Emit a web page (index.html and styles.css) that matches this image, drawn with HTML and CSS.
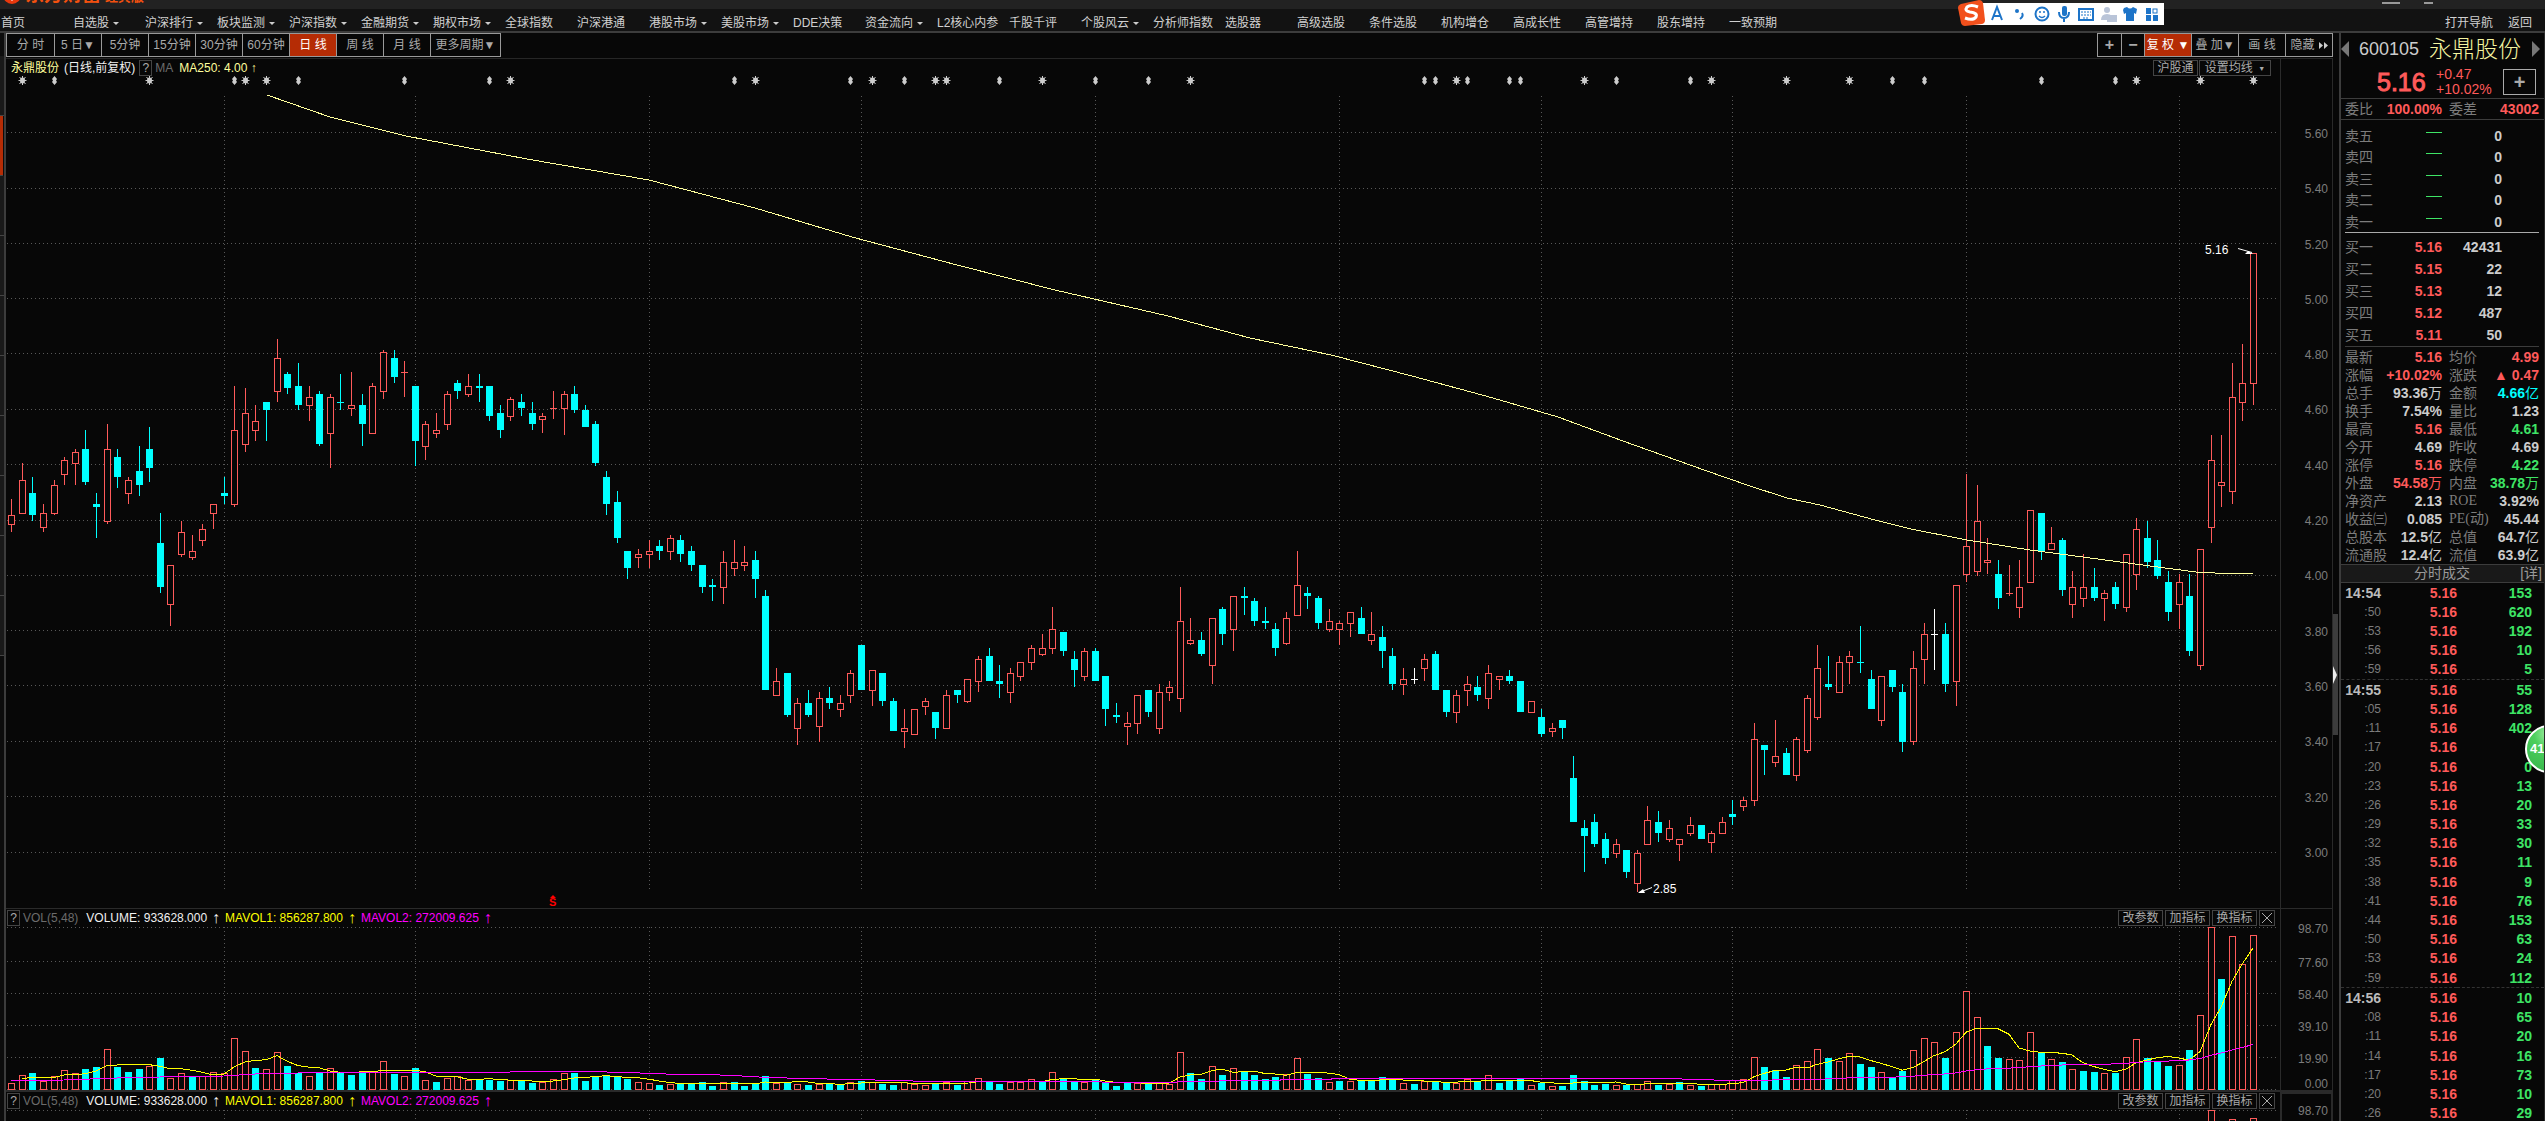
FILE: index.html
```html
<!DOCTYPE html>
<html lang="zh-CN">
<head>
<meta charset="utf-8">
<title>永鼎股份 600105</title>
<link rel="stylesheet" href="styles.css">
</head>
<body>
<header class="titlebar">
  <svg class="brand-mark" viewBox="0 0 18 18" aria-hidden="true"><circle cx="9" cy="9" r="9" fill="#e8380d"/><path d="M6 6h6l1 5-4 4-4-4z" fill="#fff"/></svg>
  <span class="brand">东方财富</span><span class="edition">经典版</span>
  <span class="window-marks"><i></i><i></i></span>
</header>
<nav class="menu">
  <a href="#">首页</a><a href="#" class="drop">自选股</a><a href="#" class="drop">沪深排行</a><a href="#" class="drop">板块监测</a><a href="#" class="drop">沪深指数</a><a href="#" class="drop">金融期货</a><a href="#" class="drop">期权市场</a><a href="#">全球指数</a><a href="#">沪深港通</a><a href="#" class="drop">港股市场</a><a href="#" class="drop">美股市场</a><a href="#">DDE决策</a><a href="#" class="drop">资金流向</a><a href="#">L2核心内参</a><a href="#">千股千评</a><a href="#" class="drop">个股风云</a><a href="#">分析师指数</a><a href="#">选股器</a><a href="#">高级选股</a><a href="#">条件选股</a><a href="#">机构增仓</a><a href="#">高成长性</a><a href="#">高管增持</a><a href="#">股东增持</a><a href="#">一致预期</a>
  <span class="menu-right"><a href="#">打开导航</a><a href="#">返回</a></span>
</nav>
<div class="ime" aria-label="输入法">
  <svg viewBox="0 0 206 26" aria-hidden="true">
    <rect x="12" y="3" width="194" height="22" fill="#fff"/>
    <path d="M3 4 21 0q3 0 4 3l2 17q0 3-3 4L7 26q-3 0-4-3L0 8q0-3 3-4z" fill="#f2501c"/>
    <path d="M20 7q-7-3-11 0-3 4 3 5 8 1 6 5-3 4-11 1" fill="none" stroke="#fff" stroke-width="3"/>
    <g fill="none" stroke="#1d74c8" stroke-width="2">
      <path d="M34 20l5-13 5 13M36 16h6"/><path d="M64 13q2 3-2 6"/><circle cx="84" cy="14" r="6.500"/><path d="M81 16q3 3 6 0M82 11v2M86 11v2" stroke-width="1.500"/>
      <path d="M101 12q0 6 5 6t5-6M106 18v4"/><rect x="121" y="9" width="14" height="11"/><path d="M123 12h10M123 15h10M125 18h6" stroke-dasharray="2 1" stroke-width="1"/>
      <rect x="195" y="9" width="4" height="4" stroke-width="1"/>
    </g>
    <g fill="#1d74c8"><circle cx="59" cy="11" r="2"/><rect x="104" y="6" width="5" height="10" rx="2"/><path d="M166 8l3-1q3 3 6 0l4 2-1 5-2-1v8h-8v-8l-2 1-1-4z"/><rect x="188" y="8" width="5" height="6"/><rect x="188" y="15" width="5" height="6"/><rect x="195" y="15" width="5" height="6"/></g>
    <g fill="#b9c4d8"><circle cx="149" cy="10" r="3"/><path d="M143 20q0-6 6-6t6 6z"/><rect x="149" y="15" width="10" height="7"/></g>
  </svg>
</div>
<main class="workspace">
  <aside class="tabs"><i></i><i class="on"></i><i></i><i></i><i></i><i></i><i></i><i></i><i></i><i></i></aside>
  <section class="charts">
    <div class="toolbar">
      <div class="group periods"><button>分 时</button><button>5 日▼</button><button>5分钟</button><button>15分钟</button><button>30分钟</button><button>60分钟</button><button class="active">日 线</button><button>周 线</button><button>月 线</button><button class="wide">更多周期▼</button></div>
      <div class="group tools"><button class="sq">+</button><button class="sq">−</button><button class="active">复 权 ▼</button><button>叠 加▼</button><button>画 线</button><button>隐藏<svg viewBox="0 0 9 7" width="9" height="7" aria-hidden="true"><path d="M0 0l4 3.500-4 3.500zM5 0l4 3.500-4 3.500z" fill="#ccc"/></svg></button></div>
    </div>
    <div class="panel price">
      <div class="plot">
        <div class="legend"><span class="name">永鼎股份</span><span class="white">(日线,前复权)</span><button class="help">?</button><span class="dim">MA</span><span class="name ma">MA250: 4.00 ↑</span>
          <span class="legend-right"><button class="chip">沪股通</button><button class="chip set">设置均线 <small>▼</small></button></span></div>
        <svg class="canvas" id="price"></svg>
      </div>
      <div class="axis prices"><span>5.60</span><span>5.40</span><span>5.20</span><span>5.00</span><span>4.80</span><span>4.60</span><span>4.40</span><span>4.20</span><span>4.00</span><span>3.80</span><span>3.60</span><span>3.40</span><span>3.20</span><span>3.00</span></div>
    </div>
    <div class="panel volume">
      <div class="plot">
        <div class="legend"><button class="help">?</button><span class="dim">VOL(5,48)</span><span class="white v">VOLUME: 933628.000</span><b class="white">↑</b><span class="yellow">MAVOL1: 856287.800</span><b class="yellow">↑</b><span class="magenta">MAVOL2: 272009.625</span><b class="magenta">↑</b>
          <span class="legend-right"><button class="chip">改参数</button><button class="chip">加指标</button><button class="chip">换指标</button><button class="chip close" aria-label="关闭"></button></span></div>
        <svg class="canvas" id="vol1"></svg>
      </div>
      <div class="axis volumes"><span>98.70</span><span>77.60</span><span>58.40</span><span>39.10</span><span>19.90</span><span>0.00</span></div>
    </div>
    <div class="panel volume second">
      <div class="plot">
        <div class="legend"><button class="help">?</button><span class="dim">VOL(5,48)</span><span class="white v">VOLUME: 933628.000</span><b class="white">↑</b><span class="yellow">MAVOL1: 856287.800</span><b class="yellow">↑</b><span class="magenta">MAVOL2: 272009.625</span><b class="magenta">↑</b>
          <span class="legend-right"><button class="chip">改参数</button><button class="chip">加指标</button><button class="chip">换指标</button><button class="chip close" aria-label="关闭"></button></span></div>
        <svg class="canvas" id="vol2"></svg>
      </div>
      <div class="axis volumes"><span>98.70</span></div>
    </div>
  </section>
  <div class="splitter"><button aria-label="收起"></button></div>
  <aside class="quote">
    <div class="stock"><button class="prev" aria-label="上一只"></button><span class="code">600105</span><h1>永鼎股份</h1><button class="next" aria-label="下一只"></button></div>
    <div class="last"><strong>5.16</strong><span>+0.47<br>+10.02%</span><button aria-label="加自选">+</button></div>
    <div class="pairs ratio"><p>委比<b class="up">100.00%</b></p><p>委差<b class="up">43002</b></p></div>
    <table class="depth sell">
      <tr><th>卖五</th><td><i></i></td><td>0</td></tr><tr><th>卖四</th><td><i></i></td><td>0</td></tr><tr><th>卖三</th><td><i></i></td><td>0</td></tr><tr><th>卖二</th><td><i></i></td><td>0</td></tr><tr><th>卖一</th><td><i></i></td><td>0</td></tr>
    </table>
    <table class="depth buy">
      <tr><th>买一</th><td>5.16</td><td>42431</td></tr><tr><th>买二</th><td>5.15</td><td>22</td></tr><tr><th>买三</th><td>5.13</td><td>12</td></tr><tr><th>买四</th><td>5.12</td><td>487</td></tr><tr><th>买五</th><td>5.11</td><td>50</td></tr>
    </table>
    <div class="pairs stats">
      <p>最新<b class="up">5.16</b></p><p>均价<b class="up">4.99</b></p>
      <p>涨幅<b class="up">+10.02%</b></p><p>涨跌<b class="up">▲ 0.47</b></p>
      <p>总手<b>93.36<em>万</em></b></p><p>金额<b class="cyan">4.66<em>亿</em></b></p>
      <p>换手<b>7.54%</b></p><p>量比<b>1.23</b></p>
      <p>最高<b class="up">5.16</b></p><p>最低<b class="down">4.61</b></p>
      <p>今开<b>4.69</b></p><p>昨收<b>4.69</b></p>
      <p>涨停<b class="up">5.16</b></p><p>跌停<b class="down">4.22</b></p>
      <p>外盘<b class="up">54.58<em>万</em></b></p><p>内盘<b class="down">38.78<em>万</em></b></p>
      <p>净资产<b>2.13</b></p><p><span class="latin">ROE</span><b>3.92%</b></p>
      <p>收益㈢<b>0.085</b></p><p><span class="latin">PE(动)</span><b>45.44</b></p>
      <p>总股本<b>12.5<em>亿</em></b></p><p>总值<b>64.7<em>亿</em></b></p>
      <p>流通股<b>12.4<em>亿</em></b></p><p>流值<b>63.9<em>亿</em></b></p>
    </div>
    <div class="deals-head"><h2>分时成交</h2><a href="#">[详]</a></div>
    <table class="deals">
      <tr class="minute"><th>14:54</th><td>5.16</td><td>153</td></tr><tr><th>:50</th><td>5.16</td><td>620</td></tr><tr><th>:53</th><td>5.16</td><td>192</td></tr><tr><th>:56</th><td>5.16</td><td>10</td></tr><tr><th>:59</th><td>5.16</td><td>5</td></tr>
      <tr class="minute"><th>14:55</th><td>5.16</td><td>55</td></tr><tr><th>:05</th><td>5.16</td><td>128</td></tr><tr><th>:11</th><td>5.16</td><td>402</td></tr><tr><th>:17</th><td>5.16</td><td></td></tr><tr><th>:20</th><td>5.16</td><td>0</td></tr><tr><th>:23</th><td>5.16</td><td>13</td></tr><tr><th>:26</th><td>5.16</td><td>20</td></tr><tr><th>:29</th><td>5.16</td><td>33</td></tr><tr><th>:32</th><td>5.16</td><td>30</td></tr><tr><th>:35</th><td>5.16</td><td>11</td></tr><tr><th>:38</th><td>5.16</td><td>9</td></tr><tr><th>:41</th><td>5.16</td><td>76</td></tr><tr><th>:44</th><td>5.16</td><td>153</td></tr><tr><th>:50</th><td>5.16</td><td>63</td></tr><tr><th>:53</th><td>5.16</td><td>24</td></tr><tr><th>:59</th><td>5.16</td><td>112</td></tr>
      <tr class="minute"><th>14:56</th><td>5.16</td><td>10</td></tr><tr><th>:08</th><td>5.16</td><td>65</td></tr><tr><th>:11</th><td>5.16</td><td>20</td></tr><tr><th>:14</th><td>5.16</td><td>16</td></tr><tr><th>:17</th><td>5.16</td><td>73</td></tr><tr><th>:20</th><td>5.16</td><td>10</td></tr><tr><th>:26</th><td>5.16</td><td>29</td></tr>
    </table>
    <div class="ball">41</div>
  </aside>
</main>
<script src="chart.js"></script>
</body>
</html>
```
FILE: styles.css
```css
* { box-sizing: border-box; margin: 0; padding: 0; }
html, body { height: 100%; }
body {
  display: flex; flex-direction: column; position: relative; overflow: hidden;
  background: #070707; color: #ccc;
  font: 12px/16px "Liberation Sans", "Noto Sans CJK SC", sans-serif;
}
button { font: inherit; color: inherit; background: none; border: 0; white-space: nowrap; }
a { color: inherit; text-decoration: none; }
i, em { font-style: normal; }

.titlebar { flex: none; display: flex; align-items: flex-end; height: 9px; padding: 0 0 5px 3px; gap: 4px; background: #222; overflow: hidden; }
.brand-mark { width: 18px; height: 18px; flex: none; }
.brand, .edition { color: #f4510f; font-weight: bold; line-height: 19px; }
.brand { font-size: 19px; }
.edition { font-size: 13px; line-height: 15px; }
.window-marks { margin-left: auto; display: flex; gap: 24px; padding-right: 112px; }
.window-marks i { width: 18px; height: 2px; background: #999; }
.window-marks i + i { width: 9px; }

.menu { flex: none; display: flex; height: 24px; padding-left: 1px; background: #121212; border-bottom: 2px solid #3c3c3c; line-height: 28px; color: #d0d0d0; }
.menu > a { width: 72px; white-space: nowrap; }
.menu .drop::after { content: ""; display: inline-block; margin: 0 0 2px 4px; border: 3px solid transparent; border-top-color: #ccc; border-bottom: 0; }
.menu-right { margin-left: auto; display: flex; gap: 15px; padding-right: 13px; }
.ime { position: absolute; top: 0; right: 381px; width: 206px; }
.ime svg { display: block; width: 206px; height: 26px; }

.workspace { flex: 1; display: flex; min-height: 0; }
.tabs { width: 6px; padding-top: 23px; background: #0c0c0c; border-right: 2px solid #3c3c3c; }
.tabs i { display: block; height: 60px; background: #191919; border-bottom: 1px solid #444; }
.tabs .on { width: 3px; background: #b52c05; }
.charts { flex: 1; min-width: 0; display: flex; flex-direction: column; overflow: hidden; }

.toolbar { flex: none; display: flex; justify-content: space-between; height: 26px; border-bottom: 1px solid #262626; }
.group { display: flex; height: 24px; border: 1px solid #999; color: #aaa; }
.group button { width: 47px; border-left: 1px solid #999; line-height: 22px; }
.group button:first-child { border-left: 0; }
.group .wide { width: 70px; }
.group .sq { width: 23px; font-size: 16px; font-weight: bold; }
.group .active { background: #b52c05; color: #fff; }
.tools svg { margin-left: 4px; }

.panel { display: flex; flex: none; border-bottom: 1px solid #2a2a2a; }
.price { height: 850px; }
.volume { height: 183px; border-bottom-width: 2px; }
.second { flex: 1; }
.plot { flex: 1; min-width: 0; position: relative; }
.canvas { position: absolute; inset: 0; width: 100%; height: 100%; }
.axis { width: 53px; padding-right: 4px; border: 0 solid #2a2a2a; border-width: 0 1px; color: #7c7c7c; text-align: right; }
.prices { display: flex; flex-direction: column; justify-content: space-between; padding-top: 67px; padding-bottom: 47px; }
.volumes { display: grid; grid-template-rows: 34px 32px 32px 32px 25px 16px; align-content: start; padding-top: 12px; }
.second .axis { border: 2px solid #2a2a2a; padding-top: 9px; padding-right: 3px; }

.legend { position: relative; z-index: 1; display: flex; align-items: center; height: 16px; margin-top: 1px; padding-left: 1px; white-space: nowrap; }
.price .legend { padding-left: 5px; }
.help { width: 13px; height: 16px; border: 1px solid #444; color: #aaa; line-height: 14px; margin-right: 3px; }
.dim { color: #6c6c6c; }
.white { color: #f0f0f0; }
.price .white { margin: 0 4px 0 5px; }
.name { color: #ffff9c; }
.ma { margin-left: 6px; }
.v { margin-left: 8px; }
.yellow { color: #ffff00; }
.magenta { color: #ff00ff; }
.legend b { width: 18px; text-align: center; font-weight: normal; font-size: 16px; }
.legend-right { margin-left: auto; display: flex; gap: 2px; padding-right: 5px; }
.price .legend-right { padding-right: 9px; gap: 1px; }
.chip { width: 45px; height: 16px; border: 1px solid #444; color: #aaa; line-height: 14px; }
.set { width: 72px; }
.set small { font-size: 7px; vertical-align: 1px; margin-left: 2px; }
.close { width: 16px; background: linear-gradient(45deg, transparent 48%, #aaa 48% 52%, transparent 52%) center / 10px 10px no-repeat, linear-gradient(-45deg, transparent 48%, #aaa 48% 52%, transparent 52%) center / 10px 10px no-repeat; }

.splitter { width: 6px; padding-top: 581px; }
.splitter button { display: block; width: 5px; height: 121px; background: #3c3c3c; }
.splitter button::after { content: ""; display: block; width: 0; border: 9px solid transparent; border-left: 4px solid #eee; border-right: 0; }

.quote { width: 206px; position: relative; border-left: 2px solid #3c3c3c; border-right: 1px solid #2a2a2a; overflow: hidden; font-size: 14px; color: #7c7c7c; }
.quote b { color: #ccc; white-space: nowrap; }
.quote em { font-weight: normal; }
.quote .up { color: #ff5a5a; }
.quote .down { color: #3ee465; }
.quote .cyan { color: #00ffff; }
.stock { display: flex; align-items: center; height: 32px; }
.prev, .next { border: 8px solid transparent; border-width: 8px 0; }
.prev { border-right: 8px solid #777; margin-right: 10px; }
.next { border-left: 8px solid #777; margin-left: auto; margin-right: 4px; }
.code { font-size: 18px; color: #ccc; margin-right: 10px; }
.stock h1 { font-size: 23px; font-weight: 300; line-height: 32px; color: #f4f4a0; }
.last { display: flex; align-items: center; height: 34px; padding: 0 8px 0 36px; border-bottom: 1px solid #3c3c3c; color: #ff5a5a; }
.last strong { font-size: 25px; font-weight: normal; -webkit-text-stroke: 1px #ff5a5a; width: 59px; }
.last span { font-size: 14px; line-height: 15px; }
.last button { margin-left: auto; width: 33px; height: 26px; border: 1px solid #aaa; color: #aaa; font-size: 20px; font-weight: bold; line-height: 22px; }
.pairs { display: grid; grid-template-columns: 97px 90px; column-gap: 7px; padding-left: 4px; line-height: 18px; }
.pairs p { display: flex; justify-content: space-between; white-space: nowrap; }
.ratio { height: 21px; line-height: 20px; border-bottom: 1px solid #3c3c3c; }
.latin { font-family: "Liberation Serif", "Noto Sans CJK SC", serif; }
.depth { width: 194px; margin-left: 4px; border-collapse: collapse; }
.depth tr { height: 22px; }
.depth th { width: 40px; font-weight: normal; text-align: left; white-space: nowrap; }
.depth td { width: 57px; text-align: right; font-weight: bold; color: #ff5a5a; }
.depth td + td { width: 97px; padding-right: 37px; color: #ccc; }
.depth i { display: block; width: 16px; height: 1px; margin: -4px 0 0 auto; background: #3ee465; }
.sell { margin-top: 5px; }
.depth.sell { border-bottom: 1px solid #aaa; height: 108px; }
.depth.buy { border-bottom: 1px solid #3c3c3c; padding-top: 3px; border-collapse: separate; border-spacing: 0; }
.depth.sell tr { height: 21px; }
.stats { padding-top: 1px; }
.deals-head { display: flex; height: 19px; padding: 0 2px 0 73px; border: solid #3c3c3c; border-width: 1px 0; background: #191919; line-height: 17px; color: #999; }
.deals-head h2 { font-size: 14px; font-weight: normal; }
.deals-head a { margin-left: auto; }
.deals { width: 203px; height: 540px; table-layout: fixed; border-collapse: collapse; line-height: 16px; }
.deals th { width: 40px; text-align: right; font-size: 12px; font-weight: normal; }
.deals td { width: 76px; text-align: right; font-weight: bold; color: #ff5a5a; }
.deals td + td { width: 87px; padding-right: 12px; color: #3ee465; }
.deals .minute th { font-size: 14px; font-weight: bold; color: #bbb; }
.deals tr + .minute { border-top: 1px dashed #333; }
.ball { position: absolute; top: 692px; right: -29px; width: 48px; height: 48px; padding-left: 3px; border: 2px solid #fff; border-radius: 50%; background: radial-gradient(circle at 50% 15%, #a8f0a8, #4ccf5c 35%, #35b34a); color: #fff; font-size: 13px; font-weight: bold; line-height: 44px; }
```
FILE: chart.js
```js
// One candle per entry: kind (r rising, c falling, w flat), high, body top, body bottom, low.
const candles = `r 499 515 525 532|r 463 480 514 514|c 477 493 515 521|r 504 513 528 532|r 480 485 514 515|r 457 460 475 485|r 449 452 464 485|c 430 449 482 485|c 493 504 507 538|r 424 449 522 524
c 449 457 477 488|r 477 480 494 504|c 446 471 485 496|c 427 449 468 482|c 513 543 587 593|r 565 565 605 626|r 521 532 555 557|r 535 551 558 560|r 524 529 541 546|r 504 504 514 529
c 477 493 496 504|r 386 430 505 507|r 388 413 445 452|r 405 421 431 441|c 402 402 410 441|r 339 358 392 402|c 372 374 388 394|c 363 386 405 410|r 386 397 406 421|c 391 394 444 446
r 394 397 434 468|c 374 402 403 410|r 372 405 409 416|c 394 405 424 446|r 383 386 434 434|r 350 352 392 399|c 350 358 377 383|r 361 372 373 397|c 386 386 441 466|r 421 424 447 460
r 413 430 434 438|r 391 394 425 430|c 380 383 391 399|r 374 386 395 397|c 374 386 388 402|c 386 386 416 421|c 405 413 430 438|r 397 399 417 421|c 394 402 408 416|c 402 413 424 430
r 413 416 420 433|r 391 408 409 419|r 391 394 409 435|c 386 394 410 413|c 405 410 427 427|c 421 424 463 466|c 471 477 504 515|c 491 502 538 543|c 551 551 568 579|r 549 554 558 568
r 540 551 555 568|c 540 546 551 560|r 535 538 552 560|c 535 540 554 562|c 546 551 565 571|c 565 565 587 593|c 579 585 587 601|r 551 562 588 604|r 540 562 569 576|r 546 562 566 571
c 551 560 579 598|c 590 596 690 690|r 668 681 696 696|c 673 673 715 717|r 698 703 729 745|c 690 703 715 717|r 692 698 727 742|c 687 698 703 709|r 695 703 710 717|r 670 673 696 703
c 645 645 690 690|r 670 670 691 706|c 673 673 701 706|c 698 701 731 731|r 709 728 732 748|r 709 709 735 735|r 698 701 707 715|c 712 712 728 739|r 690 695 729 729|c 690 690 695 703
r 679 679 702 703|r 656 659 682 692|c 648 656 681 681|c 665 681 684 698|r 668 673 693 703|r 662 662 677 681|r 645 648 663 670|r 634 648 655 656|r 607 629 649 654|c 632 632 651 656
c 651 659 670 687|r 648 651 677 681|c 648 651 681 681|c 676 676 709 726|c 703 715 717 723|r 712 723 727 745|r 695 695 724 734|c 690 690 712 717|r 684 692 729 734|r 681 687 693 701
r 587 621 699 712|r 618 640 644 645|c 632 640 654 656|r 618 618 666 684|c 607 609 634 645|r 596 596 630 651|c 587 596 598 615|c 598 601 621 626|c 607 621 623 629|c 623 629 648 656
r 612 618 644 645|r 551 585 616 616|c 587 593 596 609|c 596 598 623 629|r 609 621 630 632|r 621 623 630 645|r 612 612 624 637|c 607 618 634 634|r 612 634 641 645|c 626 637 651 668
c 648 656 684 690|r 668 679 685 695|w 668 679 680 684|r 654 659 669 681|c 651 654 690 690|c 690 690 712 717|r 690 695 713 723|r 676 684 691 706|c 676 687 695 701|r 665 673 699 709
r 676 676 680 690|c 670 676 681 684|c 681 681 712 712|r 701 701 713 713|c 709 717 734 737|r 723 728 732 737|c 720 720 728 739|c 756 778 822 822|c 820 828 836 872|c 814 822 844 847
c 833 839 858 864|r 839 844 854 858|c 850 850 872 878|r 850 853 884 892|r 806 820 845 845|c 811 822 833 842|r 820 828 840 842|r 839 839 845 861|r 817 825 834 836|c 825 825 839 839
r 831 833 843 853|r 817 822 834 834|c 800 814 817 825|r 797 800 807 811|r 723 739 801 806|c 745 745 750 775|r 720 756 763 767|c 748 753 775 775|r 737 739 776 781|r 695 698 751 753
r 645 668 718 720|c 656 684 687 690|r 656 662 693 693|r 651 656 663 684|c 626 662 663 673|c 670 679 709 709|r 676 676 721 726|c 670 670 687 692|c 684 692 742 752|r 651 668 742 745
r 623 634 660 684|w 609 634 635 670|c 623 634 684 692|r 585 585 682 706|r 474 546 575 582|r 485 521 572 576|r 538 560 563 574|c 560 574 598 609|r 565 593 594 596|r 560 587 608 618
r 510 510 583 583|c 513 513 551 560|r 527 543 550 550|c 538 540 590 596|r 571 587 605 618|r 554 587 599 607|c 568 587 598 601|r 590 593 599 621|c 582 587 604 609|r 554 554 608 612
r 518 529 575 590|c 521 538 562 568|c 540 560 576 579|c 571 582 612 621|r 574 582 605 629|c 574 596 651 656|r 549 549 666 670|r 435 460 528 543|r 435 482 486 507|r 363 397 492 504
r 344 383 403 421|r 253 253 384 405`.split(/[|\n]/).map(s => { const p = s.split(" "); return [p[0], ...p.slice(1).map(Number)]; });

const volumes = [7,15,17,9,14,20,17,21,23,41,23,18,21,24,32,12,17,14,14,18,17,52,39,22,21,38,24,17,14,18,
22,18,15,18,18,29,16,14,22,10,8,12,14,10,10,10,9,10,9,7,8,11,17,17,9,14,14,14,11,8,
7,5,6,7,6,8,4,8,8,4,6,14,7,8,6,5,6,6,6,8,9,8,6,5,8,6,5,7,8,5,
9,12,8,6,8,8,11,8,18,11,8,8,10,8,4,7,7,7,7,6,38,17,11,24,15,22,19,15,11,13,
16,32,16,12,8,9,9,10,10,13,10,7,6,9,9,8,7,11,8,15,7,9,11,5,7,4,4,15,9,5,
6,5,5,6,9,5,6,8,5,4,6,6,10,11,33,23,20,13,25,29,41,32,29,37,26,23,18,13,19,40,
52,48,32,58,99,73,44,32,31,30,58,37,31,28,21,19,18,17,17,33,51,32,28,24,25,40,75,163,111,154,126,155];

const ma250 = [[267,95],[330,117],[406,136],[527,159],[649,180],[755,208],[852,237],[957,265],[1055,290],[1168,316],[1250,338],[1331,355],[1412,376],[1493,398],[1558,417],[1623,441],[1704,470],[1750,486],[1787,498],[1820,505],[1875,520],[1911,529],[1967,540],[2030,550],[2090,558],[2150,566],[2196,572],[2215,573],[2253,573]];
const earlyMavol2 = [[0,9],[5,10],[10,12],[14,13],[20,14],[23,16],[27,17],[31,18],[47,18]];
const stars = [1,13,22,24,47,70,81,87,88,97,111,136,148,160,167,173,200,206,211];
const diamonds = [4,21,27,37,45,68,79,84,93,102,107,133,134,137,141,142,151,158,177,180,191,198];
const months = [20,38,60,80,102,125,144,162,184,204];
const RED = "#ff5a5a", CYAN = "#00ffff", GRID = "#585858";

let scale = 1;
const cx = i => Math.round(scale * (5 + 10.626 * i));
const line = (x1, y1, x2, y2, c, extra = "") => `<path d="M${x1} ${y1}L${x2} ${y2}" stroke="${c}" fill="none" ${extra}/>`;
const poly = (pts, c) => `<polyline points="${pts.join(" ")}" fill="none" stroke="${c}" shape-rendering="crispEdges"/>`;

function grid(w, rows, top, bottom) {
  const dots = 'stroke-dasharray="1 3" shape-rendering="crispEdges"';
  return rows.map(y => line(1, y + .5, w - 3, y + .5, GRID, dots)).join("") +
    months.map(i => line(cx(i) + .5, top, cx(i) + .5, bottom, GRID, dots)).join("");
}

function open(id, top) {
  const svg = document.getElementById(id);
  const box = svg.getBoundingClientRect();
  scale = box.width / 2274;
  svg.setAttribute("viewBox", `0 ${top} ${box.width} ${box.height}`);
  return [svg, box.width];
}

function drawPrice() {
  const [svg, w] = open("price", 59);
  let out = grid(w, [132,188,243,298,353,409,464,520,575,630,685,741,796,852], 96, 890);
  candles.forEach(([kind, hi, top, bot, lo], i) => {
    const x = cx(i), c = kind === "r" ? RED : kind === "c" ? CYAN : "#fff";
    out += `<rect x="${x}" y="${hi}" width="1" height="${Math.max(top - hi, 0)}" fill="${c}"/><rect x="${x}" y="${bot}" width="1" height="${Math.max(lo - bot, 0)}" fill="${c}"/>`;
    out += kind === "r" && bot - top > 1
      ? `<rect x="${x - 2.5}" y="${top + .5}" width="6" height="${bot - top - 1}" fill="#070707" stroke="${c}"/>`
      : `<rect x="${x - 3}" y="${top}" width="7" height="${bot - top}" fill="${c}"/>`;
  });
  out += poly(ma250.map(([x, y]) => [(x - 6) * scale, y]), "#ffff9c");
  stars.forEach(i => { const x = cx(i) + .5;
    out += `<ellipse cx="${x}" cy="80.500" rx="2.500" ry="3" fill="#ccc"/><path d="M${x} 76v9M${x - 4} 80.500h8M${x - 3} 77l6 7M${x + 3} 77l-6 7" stroke="#ccc"/>`; });
  diamonds.forEach(i => { const x = cx(i) + .5;
    out += `<path d="M${x} 76l2.500 3-1 1.500 1 1.500-2.500 3-2.500-3 1-1.500-1-1.500z" fill="#ccc"/>`; });
  const hi = cx(211), lo = cx(153), s = cx(51);
  out += `<text x="${hi - 48}" y="254" fill="#fff">5.16</text>` + line(hi - 15, 248.5, hi - 1, 252.5, "#fff") + `<path d="M${hi} 254l-8 0 3-3z" fill="#fff"/>`;
  out += `<text x="${lo + 16}" y="893" fill="#fff">2.85</text>` + line(lo + 2, 892.5, lo + 15, 887.5, "#fff") + `<path d="M${lo + 1} 893l7 0-2-4z" fill="#fff"/>`;
  out += `<text x="${s - 4}" y="906" fill="#f00" font-size="11" font-weight="bold">S</text><path d="M${s - 3} 898l3-3 3 3z" fill="#f00"/>`;
  svg.innerHTML = out;
}

function average(i, n) {
  const part = volumes.slice(Math.max(0, i - n + 1), i + 1);
  return part.reduce((a, b) => a + b, 0) / part.length;
}
function early(i) {
  const k = earlyMavol2.findIndex(p => p[0] >= i);
  if (k < 1) return earlyMavol2[0][1];
  const [a, u] = earlyMavol2[k - 1], [b, v] = earlyMavol2[k];
  return u + (v - u) * (i - a) / (b - a);
}

function drawVolume(id) {
  const [svg, w] = open(id, 909);
  let out = grid(w, [927,961,993,1025,1057,1089], 927, 1090);
  volumes.forEach((v, i) => {
    const close = k => candles[k][0] === "r" ? candles[k][2] : candles[k][3];
    const x = cx(i), up = i === 0 || close(i) < close(i - 1) || i === 181;
    out += up ? `<rect x="${x - 2.5}" y="${1090.5 - v}" width="6" height="${v - 1}" fill="#070707" stroke="${RED}"/>`
      : `<rect x="${x - 3}" y="${1090 - v}" width="7" height="${v}" fill="${CYAN}"/>`;
  });
  out += poly(volumes.map((v, i) => [cx(i), 1090 - average(i, 5)]).slice(1), "#ffff00");
  out += poly(volumes.map((v, i) => [cx(i), 1090 - (i < 48 ? early(i) : average(i, 48))]), "#ff00ff");
  svg.innerHTML = out;
}

function draw() { drawPrice(); drawVolume("vol1"); drawVolume("vol2"); }
draw();
addEventListener("resize", draw);
```
